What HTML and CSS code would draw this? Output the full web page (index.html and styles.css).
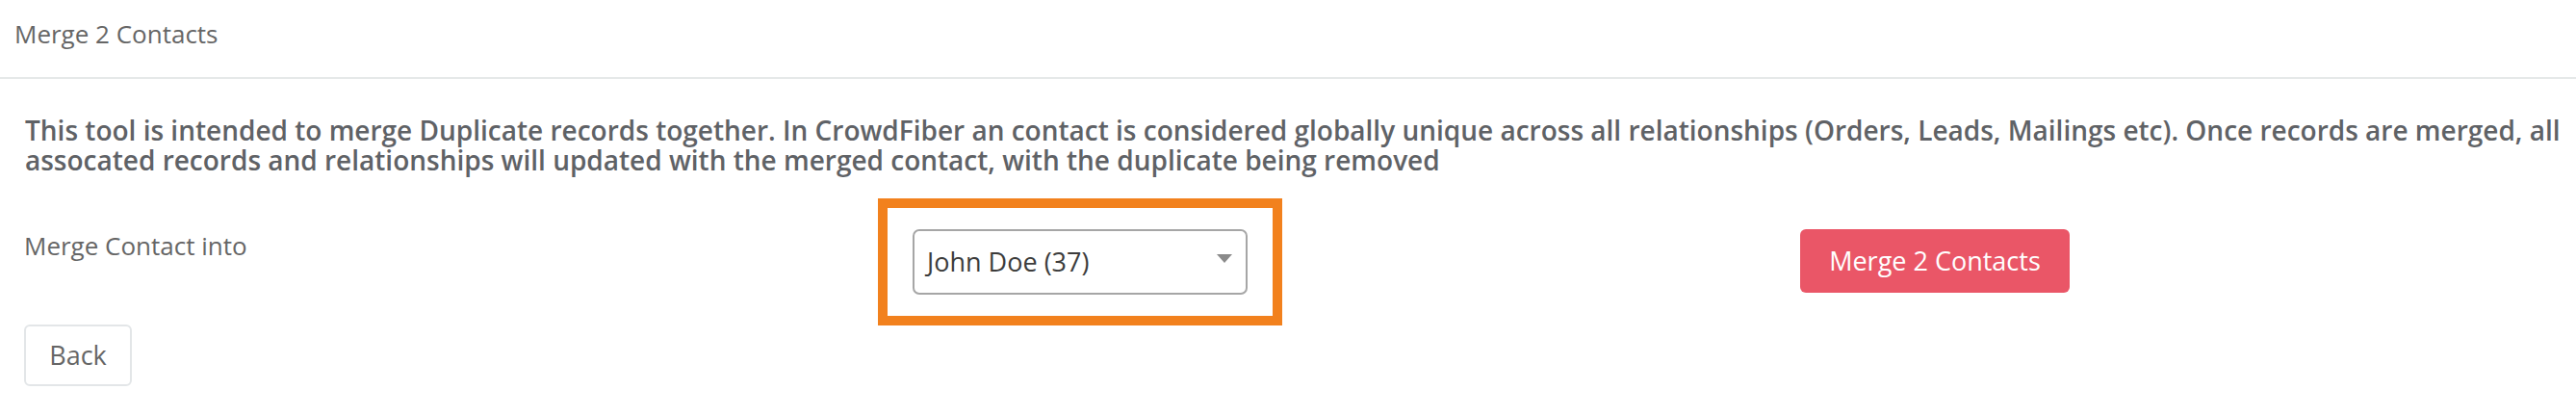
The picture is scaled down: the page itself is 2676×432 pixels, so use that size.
FILE: index.html
```html
<!DOCTYPE html>
<html lang="en">
<head>
<meta charset="utf-8">
<title>Merge 2 Contacts</title>
<link rel="stylesheet" href="styles.css">
</head>
<body>
<div class="page">
  <header class="header">
    <h1 class="title">Merge 2 Contacts</h1>
  </header>
  <main class="content">
    <p class="intro">This tool is intended to merge Duplicate records together. In CrowdFiber an contact is considered globally unique across all relationships (Orders, Leads, Mailings etc). Once records are merged, all<br>assocated records and relationships will updated with the merged contact, with the duplicate being removed</p>
    <div class="form-row">
      <label class="label" for="target">Merge Contact into</label>
      <div class="select-col">
        <div class="select-wrap highlight">
          <div class="select" id="target">
            <span class="select-text">John Doe (37)</span>
            <span class="caret"></span>
          </div>
        </div>
      </div>
      <div class="action-col">
        <button class="btn btn-primary" type="button">Merge 2 Contacts</button>
      </div>
    </div>
    <div class="footer-row">
      <button class="btn btn-default" type="button">Back</button>
    </div>
  </main>
</div>
</body>
</html>
```
FILE: styles.css
```css
* { box-sizing: border-box; }
html, body { margin: 0; padding: 0; background: #ffffff; }
body {
  font-family: "Open Sans", "Liberation Sans", sans-serif;
  color: #666666;
  width: 2676px;
  height: 432px;
  overflow: hidden;
}
.header {
  height: 82px;
  padding: 18px 15px 0;
  border-bottom: 2px solid #e6e9e9;
}
.title {
  margin: 0;
  font-size: 26px;
  font-weight: 400;
  line-height: 35px;
  color: #666666;
}
.content {
  padding: 38px 4px 0 25px;
}
.intro {
  margin: 0 0 0 1px;
  font-size: 28px;
  font-weight: 600;
  line-height: 31px;
  color: #5f6266;
  white-space: nowrap;
}
.form-row {
  margin-top: 56px;
  display: grid;
  grid-template-columns: 923px 348px 1fr;
  align-items: start;
}
.label {
  font-size: 26px;
  line-height: 35px;
  color: #666666;
}
.select-col { display: flex; }
.select-wrap { position: relative; width: 348px; }
.highlight::after {
  content: "";
  position: absolute;
  top: -32px;
  bottom: -32px;
  left: -36px;
  right: -36px;
  border: 10px solid #f2811d;
  pointer-events: none;
}
.select {
  height: 68px;
  border: 2px solid #a6a6a6;
  border-radius: 7px;
  display: flex;
  align-items: center;
  justify-content: space-between;
  padding: 0 14px 2px 13px;
  background: #ffffff;
}
.select-text {
  font-size: 27px;
  color: #3c3c3c;
}
.caret {
  width: 0;
  height: 0;
  border-left: 8px solid transparent;
  border-right: 8px solid transparent;
  border-top: 9px solid #8a8a8a;
  margin-top: -6px;
}
.action-col {
  padding-left: 574px;
}
.btn {
  font-family: "Open Sans", "Liberation Sans", sans-serif;
  font-size: 27px;
  line-height: 36px;
  border-radius: 6px;
  cursor: pointer;
}
.btn-primary {
  width: 280px;
  height: 66px;
  background: #ea5667;
  border: none;
  color: #ffffff;
  padding: 0;
}
.footer-row {
  margin-top: 31px;
}
.btn-default {
  width: 112px;
  height: 64px;
  background: #ffffff;
  border: 2px solid #e3e6e8;
  color: #666666;
  padding: 0;
}
```
